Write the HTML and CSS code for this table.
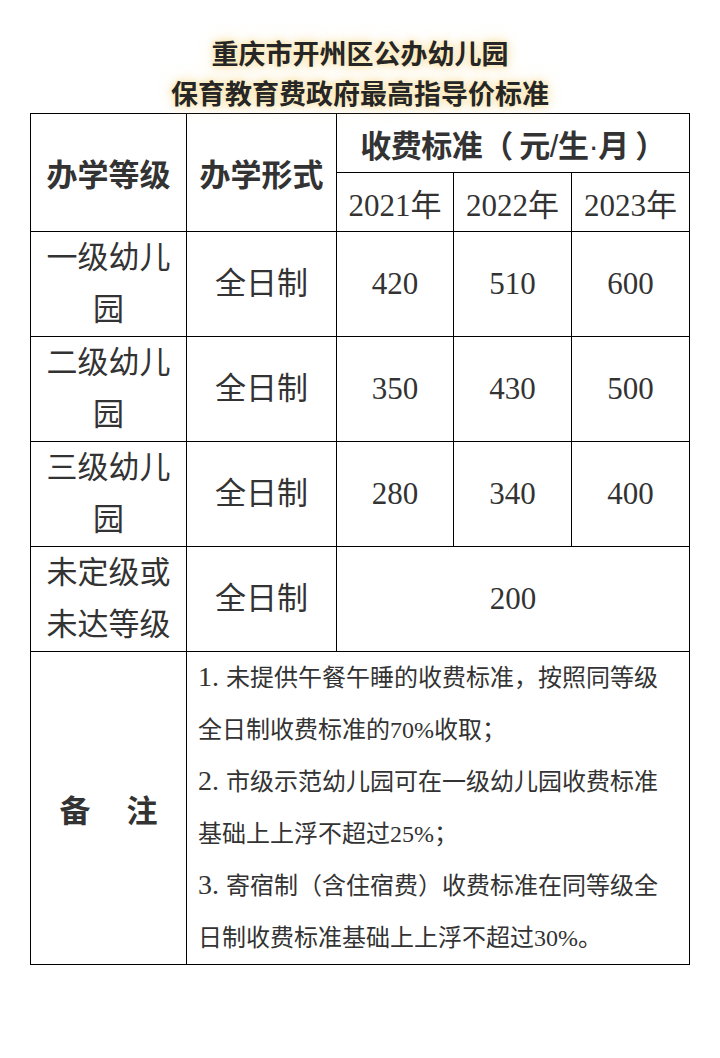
FILE: index.html
```html
<!DOCTYPE html>
<html lang="zh-CN">
<head>
<meta charset="utf-8">
<link rel="stylesheet" href="styles.css">
</head>
<body>
<div class="page">
  <h1 class="title"><span>重庆市开州区公办幼儿园</span><span>保育教育费政府最高指导价标准</span></h1>
  <table class="fees">
    <colgroup>
      <col class="c1"><col class="c2"><col class="c3"><col class="c4"><col class="c5">
    </colgroup>
    <tr class="hrow">
      <th rowspan="2">办学等级</th>
      <th rowspan="2">办学形式</th>
      <th colspan="3" class="feehead">收费标准（ 元<span class="lat">/</span>生<span class="lat">·</span>月 ）</th>
    </tr>
    <tr class="hrow">
      <td>2021年</td><td>2022年</td><td>2023年</td>
    </tr>
    <tr class="drow">
      <td class="grade">一级幼儿园</td><td>全日制</td><td>420</td><td>510</td><td>600</td>
    </tr>
    <tr class="drow">
      <td class="grade">二级幼儿园</td><td>全日制</td><td>350</td><td>430</td><td>500</td>
    </tr>
    <tr class="drow">
      <td class="grade">三级幼儿园</td><td>全日制</td><td>280</td><td>340</td><td>400</td>
    </tr>
    <tr class="drow">
      <td class="grade">未定级或未达等级</td><td>全日制</td><td colspan="3">200</td>
    </tr>
    <tr class="nrow">
      <th class="remark">备<span class="gap"></span>注</th>
      <td colspan="4" class="notes">
        <p><span class="num">1.</span>未提供午餐午睡的收费标准，按照同等级全日制收费标准的70%收取；</p>
        <p><span class="num">2.</span>市级示范幼儿园可在一级幼儿园收费标准基础上上浮不超过25%；</p>
        <p><span class="num">3.</span>寄宿制（含住宿费）收费标准在同等级全日制收费标准基础上上浮不超过30%。</p>
      </td>
    </tr>
  </table>
</div>
</body>
</html>
```

FILE: styles.css
```css
html, body {
  margin: 0;
  padding: 0;
  background: #fff;
}
.page {
  width: 720px;
  padding-top: 33px;
}
.title {
  margin: 0;
  display: flex;
  flex-direction: column;
  align-items: center;
  font-family: "Noto Sans CJK SC", sans-serif;
  font-weight: 700;
  font-size: 27px;
  line-height: 40px;
  color: #262626;
  text-shadow: 0 0 4px rgba(255, 238, 190, 1), 0 0 9px rgba(248, 218, 150, 0.85), 0 0 16px rgba(250, 228, 170, 0.7);
}
.fees {
  margin-left: 30px;
  border-collapse: collapse;
  table-layout: fixed;
  width: 660px;
  font-family: "Liberation Serif", "Noto Sans CJK SC", serif;
  color: #333;
  font-size: 31px;
}
.c1 { width: 156px; }
.c2 { width: 150px; }
.c3 { width: 117px; }
.c4 { width: 118px; }
.c5 { width: 118px; }
.fees th, .fees td {
  border: 1px solid #000;
  padding: 0;
  text-align: center;
  vertical-align: middle;
}
.fees th {
  font-family: "Noto Sans CJK SC", sans-serif;
  font-weight: 700;
  color: #333;
}
.feehead {
  letter-spacing: -0.5px;
}
.lat {
  font-family: "Liberation Sans", sans-serif;
  font-weight: 400;
}
.hrow { height: 59px; }
.drow { height: 105px; }
.drow td { line-height: 52px; }
.grade {
  padding: 0 12px !important;
}
.nrow { height: 313px; }
.remark .gap {
  display: inline-block;
  width: 36px;
}
.notes {
  text-align: left !important;
  padding: 0 12px 0 11px !important;
  font-size: 24px;
  line-height: 52px;
}
.notes p {
  margin: 0;
  height: 104px;
}
.num {
  display: inline-block;
  font-size: 28px;
  line-height: 30px;
  margin-right: 7px;
}
```
